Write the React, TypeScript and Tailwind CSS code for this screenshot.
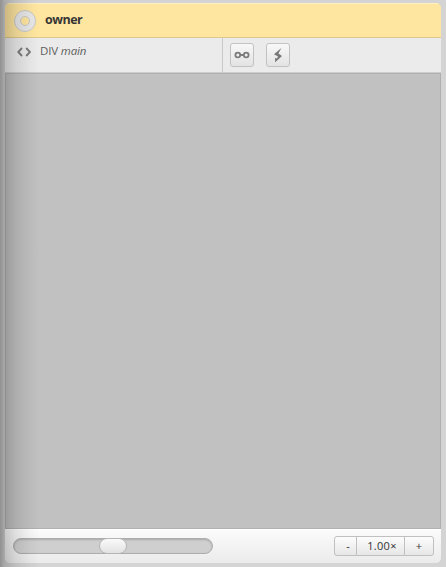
import React from "react";

function Header() {
  return (
    <header className="flex h-[35px] shrink-0 items-center border-t border-b border-t-[#fff0c4] border-b-[#dfca8d] bg-[#ffe6a0] pl-2">
      <svg width="24" height="24" viewBox="0 0 24 24" className="shrink-0">
        <circle cx="12" cy="12" r="7.4" fill="none" stroke="#e8e8e8" strokeWidth="6.2" />
        <circle cx="12" cy="12" r="10.5" fill="none" stroke="#c8c8c8" strokeWidth="1" />
        <circle cx="12" cy="12" r="4.5" fill="none" stroke="#c8c8c8" strokeWidth="1" />
      </svg>
      <h1 className="-mt-0.5 ml-2 text-[12.5px] leading-4 font-bold tracking-[-0.5px] text-[#363636]">owner</h1>
    </header>
  );
}

function IconButton({ children }: { children: React.ReactNode }) {
  return (
    <button className="h-6 w-6 rounded-[3px] border border-[#c2c2c2] bg-linear-to-b from-[#f8f8f8] to-[#e3e3e3]">
      {children}
    </button>
  );
}

function Toolbar() {
  return (
    <div className="flex h-[35px] shrink-0 border-b border-[#cccccc] bg-[#ebebeb]">
      <div className="flex w-[218px] border-r border-[#c9c9c9] pl-3">
        <svg width="14" height="10" viewBox="0 0 14 10" className="mt-[9px]" fill="none" stroke="#7c7c7c" strokeWidth="1.9">
          <path d="M5 1 1.3 5 5 9M9.2 1l3.7 4-3.7 4" />
        </svg>
        <p className="mt-[5px] ml-[9px] text-[11.5px] leading-4 tracking-[-0.15px] text-[#5d5d5d]">
          DIV <i>main</i>
        </p>
      </div>
      <div className="flex gap-3 pt-[5px] pl-[7px]">
        <IconButton>
          <svg width="22" height="22" viewBox="0 0 22 22" fill="none" stroke="#7c7c7c" strokeWidth="1.8">
            <circle cx="6.8" cy="11" r="2.4" />
            <circle cx="15.2" cy="11" r="2.4" />
            <path d="M9 11h4" strokeWidth="2" />
          </svg>
        </IconButton>
        <IconButton>
          <svg width="22" height="22" viewBox="0 0 22 22" fill="#777777">
            <path d="M14.4 4 7 10.2 11 12.4 10 14.4 8 13.9 8.2 18.2 15 12 11.4 9.6Z" />
          </svg>
        </IconButton>
      </div>
    </div>
  );
}

function Footer() {
  return (
    <footer className="flex h-[34px] shrink-0 items-start justify-between border-t border-white bg-linear-to-b from-[#fbfbfb] to-[#ebebeb] pr-[7px] pl-2">
      <div className="mt-2 flex h-4 w-[200px] rounded-full border border-[#adadad] bg-[#cfcfcf] pl-[85px] shadow-[inset_0_1px_2px_rgba(0,0,0,0.18)]">
        <div className="-mt-px h-4 w-7 rounded-full border border-[#b5b5b5] bg-linear-to-b from-[#fafafa] to-[#e2e2e2]" />
      </div>
      <div className="mt-[6px] flex h-5 w-[100px] rounded-[3px] border border-[#c0c0c0] bg-linear-to-b from-[#fcfcfc] to-[#e7e7e7] text-[11px] leading-[18px] text-[#333]">
        <button className="w-[21px] pl-[5px]">-</button>
        <span className="w-[49px] border-x border-[#c0c0c0] pl-[3px] text-center tracking-[0.3px]">1.00×</span>
        <button className="flex-1">+</button>
      </div>
    </footer>
  );
}

export default function App() {
  return (
    <div className="relative flex h-[567px] w-[446px] overflow-hidden bg-[#d4d4d4] px-[5px] pt-[3px] pb-1 font-['Open_Sans',sans-serif]">
      <main className="flex flex-1 flex-col overflow-hidden rounded-[5px]">
        <Header />
        <Toolbar />
        <div className="flex-1 border border-[#b0b0b0] bg-[#c1c1c1]" />
        <Footer />
      </main>
      <div className="pointer-events-none absolute inset-y-0 left-0 w-10 bg-[linear-gradient(to_right,rgba(0,0,0,0.32)_0%,rgba(0,0,0,0.2)_12%,rgba(0,0,0,0.1)_40%,rgba(0,0,0,0.03)_75%,transparent_100%)]" />
    </div>
  );
}
